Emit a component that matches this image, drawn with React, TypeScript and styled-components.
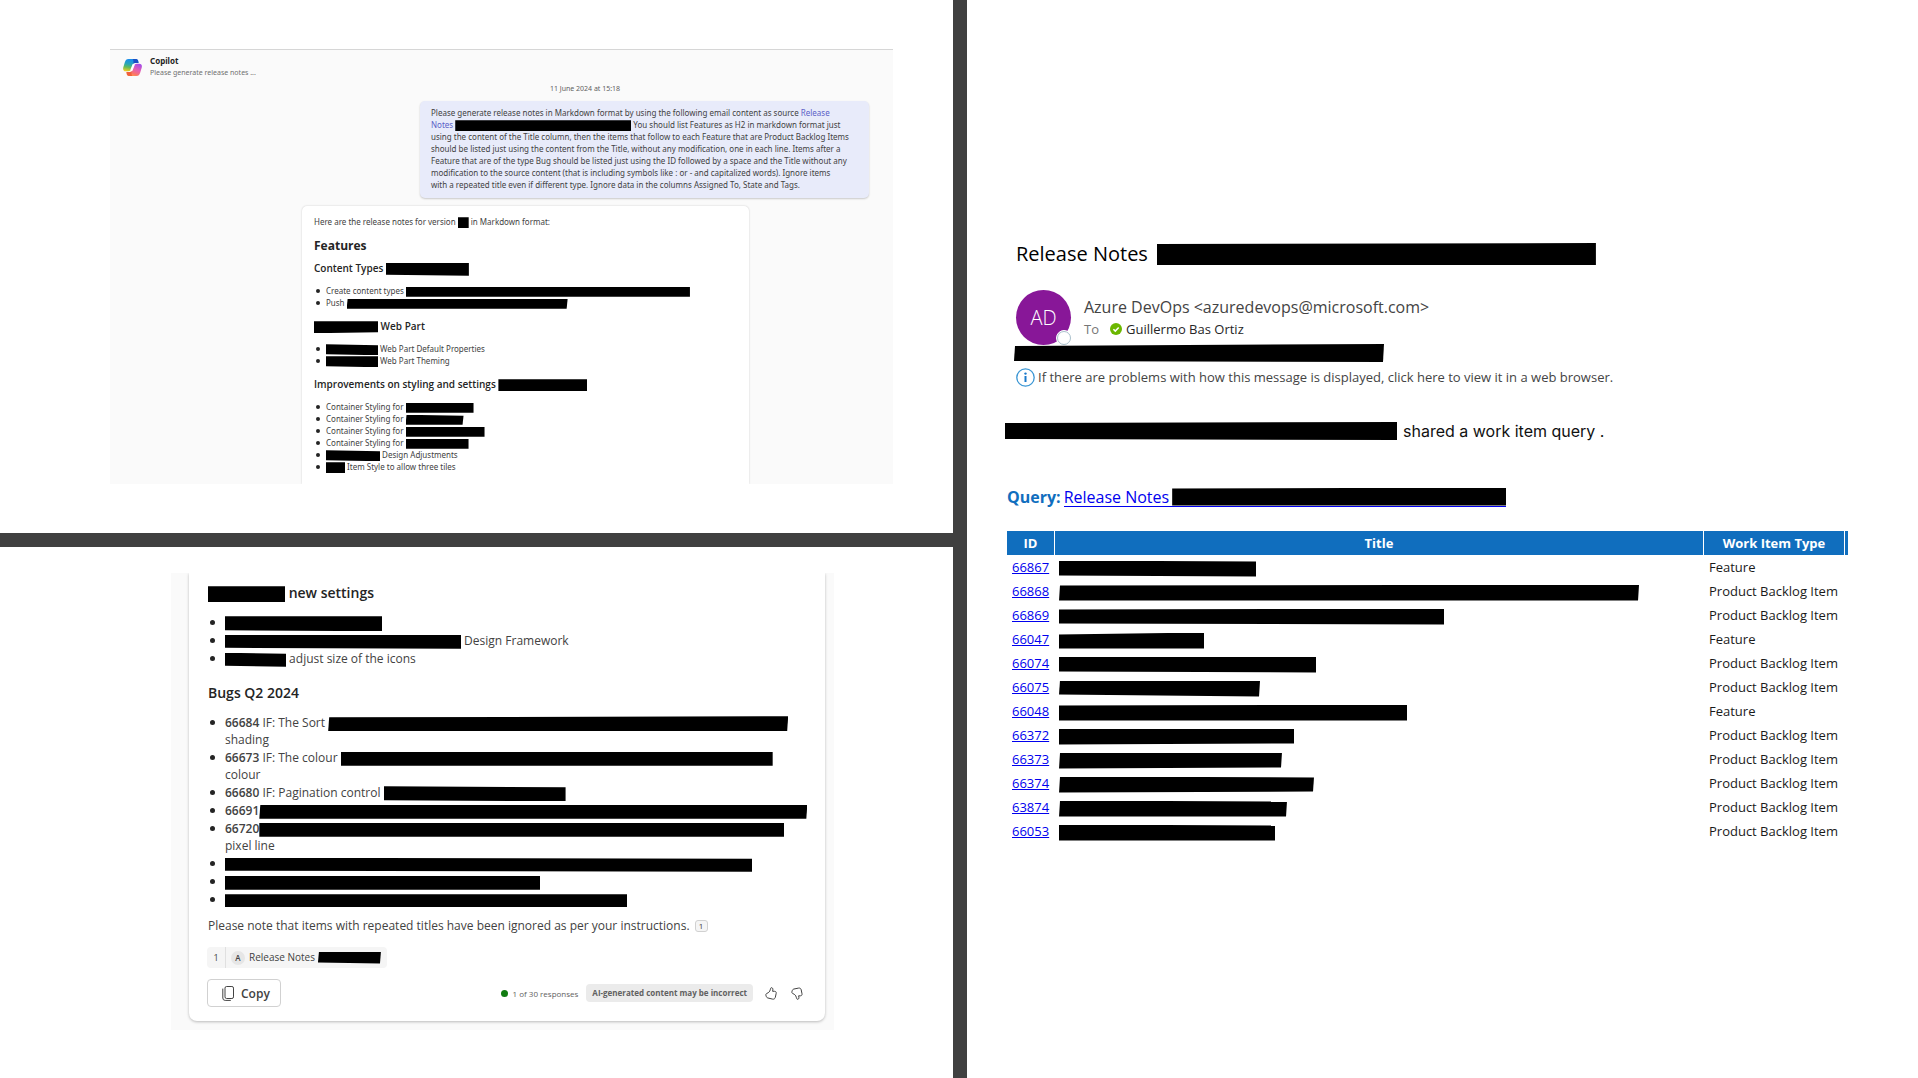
import React from "react";
import styled, { createGlobalStyle, css } from "styled-components";

/* ---------- shared ---------- */

const sans = `"Open Sans", "Noto Sans", sans-serif`;

const GlobalStyle = createGlobalStyle`
  *, *::before, *::after { box-sizing: border-box; }
  body { margin: 0; background: #404040; font-family: ${sans}; color: #242424; }
  h1, h2, h3, p, ul { margin: 0; padding: 0; }
  button { font: inherit; color: inherit; cursor: pointer; }
`;

type Cut = [number, number, number, number];

/* Black marker bar; cut = inset of each corner (top-left, top-right, bottom-right, bottom-left) */
const Redacted = styled.span<{ $w: number; $h: number; $cut?: Cut; $lean?: boolean }>`
  display: inline-block;
  flex: none;
  max-width: 100%;
  width: ${(p) => p.$w}px;
  height: ${(p) => p.$h}px;
  margin: -2px 0;
  vertical-align: middle;
  background: #000;
  ${({ $cut = [0, 0, 0, 0], $lean }) => css`
    clip-path: polygon(
      ${$lean ? 1 : 0}px ${$cut[0]}px,
      100% ${$cut[1]}px,
      calc(100% - ${$lean ? 1 : 0}px) calc(100% - ${$cut[2]}px),
      0 calc(100% - ${$cut[3]}px)
    );
  `}
`;

const Page = styled.main`
  display: grid;
  grid-template-columns: 953fr 951fr;
  gap: 14px;
  min-height: 100vh;
  background: #404040;
`;

const LeftColumn = styled.div`
  display: grid;
  grid-template-rows: 533fr 531fr;
  gap: 14px;
  min-width: 0;
`;

const Panel = styled.section`
  display: flex;
  flex-direction: column;
  min-width: 0;
  background: #fff;
`;

/* ---------- chat request ---------- */

const ChatPanel = styled(Panel)`
  padding: 49px 60px 49px 110px;
`;

const Chat = styled.div`
  flex: 1;
  display: flex;
  flex-direction: column;
  overflow: hidden;
  background: #fafafa;
  border-top: 1px solid #d6d6d6;
  font-family: "Noto Sans", sans-serif;
  font-size: 8px;
  line-height: 12px;
  color: #424242;
`;

const ChatHeader = styled.header`
  display: flex;
  align-items: center;
  gap: 8px;
  padding: 5px 13px 1px;
`;

const ChatName = styled.h1`
  font-size: 8px;
  line-height: 12px;
  font-weight: 700;
  color: #242424;
`;

const ChatPreview = styled.p`
  font-size: 7px;
  line-height: 12px;
  color: #707070;
`;

const Thread = styled.div`
  flex: 1;
  display: flex;
  flex-direction: column;
  margin: 3px 24px 0 191px;
`;

const Stamp = styled.time`
  align-self: center;
  font-size: 7px;
  color: #616161;
`;

const Bubble = styled.p`
  align-self: flex-end;
  margin-top: 6px;
  padding: 6px 10px 7px 11px;
  width: 449px;
  border-radius: 5px;
  background: #e8ebfa;
  box-shadow: 0 1px 2px rgba(0, 0, 0, 0.2);
`;

const SourceLink = styled.a`
  color: #5b5fc7;
  text-decoration: none;
`;

const AnswerTop = styled.article`
  flex: 1;
  margin: 8px 120px 0 1px;
  padding: 10px 12px 0;
  background: #fff;
  border-radius: 5px 5px 0 0;
  box-shadow: 0 0 2px rgba(0, 0, 0, 0.2);
`;

const SmallTitle = styled.h2`
  margin-top: 10px;
  font-family: ${sans};
  font-size: 12px;
  line-height: 16px;
  font-weight: 700;
  color: #242424;
`;

const SmallHeading = styled.h3<{ $first?: boolean }>`
  margin-top: ${(p) => (p.$first ? 7 : 10)}px;
  font-family: ${sans};
  font-size: 10px;
  line-height: 14px;
  font-weight: 600;
  color: #242424;
`;

const Bullets = styled.ul<{ $large?: boolean }>`
  list-style: none;
  margin-top: ${(p) => (p.$large ? 12 : 10)}px;
  padding-left: ${(p) => (p.$large ? 17 : 12)}px;

  li {
    position: relative;
    margin-bottom: ${(p) => (p.$large ? 1 : 0)}px;
  }
  li::before {
    content: "";
    position: absolute;
    left: ${(p) => (p.$large ? -15 : -10)}px;
    top: ${(p) => (p.$large ? 6 : 4)}px;
    width: ${(p) => (p.$large ? 5 : 4)}px;
    height: ${(p) => (p.$large ? 5 : 4)}px;
    border-radius: 50%;
    background: #242424;
  }
`;

/* ---------- chat answer ---------- */

const AnswerPanel = styled(Panel)`
  padding: 26px 119px 48px 171px;
`;

const AnswerFrame = styled.div`
  flex: 1;
  display: flex;
  overflow: hidden;
  padding: 0 9px 9px 18px;
  background: #fafafa;
`;

const AnswerBottom = styled.article`
  flex: 1;
  min-width: 0;
  padding: 11px 16px 11px 19px;
  background: #fff;
  border-radius: 0 0 8px 8px;
  box-shadow: 0 1px 3px rgba(0, 0, 0, 0.26);
  font-size: 12px;
  line-height: 17px;
  color: #424242;
`;

const Heading = styled.h3`
  font-size: 14px;
  line-height: 18px;
  font-weight: 600;
  color: #242424;

  ul + & {
    margin-top: 17px;
  }
`;

const ItemId = styled.strong`
  font-weight: 600;
`;

const Note = styled.p`
  margin-top: 9px;
  line-height: 18px;
`;

const Citation = styled.button`
  width: 13px;
  height: 12px;
  margin: 0 0 0 2px;
  padding: 0;
  vertical-align: 1px;
  border: 1px solid #d1d1d1;
  border-radius: 3px;
  background: #f5f5f5;
  font-size: 8px;
  line-height: 9px;
`;

const SourceChip = styled.a`
  display: flex;
  align-items: center;
  width: fit-content;
  height: 21px;
  margin: 12px 0 11px -1px;
  padding-right: 6px;
  border-radius: 4px;
  background: #f5f5f5;
  font-size: 10px;
  color: #424242;
  text-decoration: none;
`;

const ChipIndex = styled.span`
  align-self: stretch;
  display: flex;
  align-items: center;
  justify-content: center;
  width: 19px;
  border-right: 1px solid #e0e0e0;
  font-size: 9px;
`;

const ChipAvatar = styled.span`
  display: flex;
  align-items: center;
  justify-content: center;
  width: 14px;
  height: 14px;
  margin: 0 4px 0 5px;
  border-radius: 50%;
  background: #e6e6e6;
  font-size: 8px;
  font-weight: 600;
`;

const ChipLabel = styled.span`
  margin-right: 3px;
`;

const Footer = styled.footer`
  display: flex;
  align-items: center;
`;

const CopyButton = styled.button`
  display: flex;
  align-items: center;
  gap: 7px;
  height: 28px;
  margin: 0 auto 0 -1px;
  padding: 0 10px 0 14px;
  border: 1px solid #d1d1d1;
  border-radius: 4px;
  background: #fff;
  font-weight: 600;
`;

const Count = styled.span`
  display: flex;
  align-items: center;
  gap: 5px;
  font-size: 8px;
  color: #616161;

  &::before {
    content: "";
    width: 7px;
    height: 7px;
    border-radius: 50%;
    background: #107c10;
  }
`;

const Badge = styled.span`
  margin: 0 6px 0 8px;
  padding: 0 6px;
  border-radius: 4px;
  background: #ebebeb;
  font-size: 8px;
  line-height: 18px;
  font-weight: 700;
  color: #616161;
`;

const IconButton = styled.button`
  display: flex;
  padding: 6px;
  border: 0;
  background: none;

  & + & {
    margin-left: 2px;
  }
`;

/* ---------- e-mail ---------- */

const MailPanel = styled(Panel)`
  padding: 240px 70px 0 40px;
  color: #000;
`;

const MailHead = styled.header`
  padding-left: 9px;
`;

const Subject = styled.h1`
  display: flex;
  align-items: center;
  gap: 9px;
  font-size: 20px;
  line-height: 28px;
  font-weight: 400;
`;

const Sender = styled.div`
  display: flex;
  gap: 13px;
  margin-top: 22px;
`;

const Avatar = styled.div`
  position: relative;
  display: flex;
  align-items: center;
  justify-content: center;
  width: 55px;
  height: 55px;
  border-radius: 50%;
  background: #881798;
  color: #fff;
  font-size: 20px;
  font-weight: 300;
`;

const Presence = styled.span`
  position: absolute;
  right: -1px;
  bottom: -1px;
  width: 16px;
  height: 16px;
  border: 1px solid #fff;
  border-radius: 50%;
  background: #fff;

  &::before {
    content: "";
    display: block;
    height: 14px;
    border: 1px solid #a9c0cc;
    border-radius: 50%;
  }
`;

const Addresses = styled.div`
  padding-top: 6px;
`;

const From = styled.p`
  font-size: 16px;
  line-height: 22px;
  color: #444;
`;

const To = styled.p`
  display: flex;
  align-items: center;
  gap: 4px;
  font-size: 13px;
  line-height: 22px;
  color: #262626;
`;

const ToLabel = styled.span`
  width: 22px;
  color: #767676;
`;

const HiddenLine = styled.p`
  display: flex;
  height: 16px;
  margin: 1px 0 0 -2px;
`;

const InfoLink = styled.button`
  display: flex;
  align-items: center;
  gap: 3px;
  margin-top: 5px;
  padding: 0;
  border: 0;
  background: none;
  font-size: 13px;
  line-height: 20px;
  color: #444;
  text-align: left;
`;

const Shared = styled.p`
  display: flex;
  align-items: center;
  gap: 6px;
  margin: 32px 0 0 -2px;
  font-family: Inter, "Liberation Sans", sans-serif;
  font-size: 16px;
  line-height: 24px;
  color: #111;
`;

const Query = styled.p`
  display: flex;
  align-items: center;
  gap: 3px;
  margin: 42px 0 22px;
  font-size: 16px;
  line-height: 24px;
`;

const QueryLabel = styled.strong`
  color: #106ebe;
`;

const QueryLink = styled.a`
  display: flex;
  align-items: center;
  gap: 3px;
  height: 19px;
  border-bottom: 1px solid #0000ee;
  color: #0000ee;
  text-decoration: none;
`;

const Items = styled.table`
  width: 100%;
  border-collapse: separate;
  border-spacing: 0;
  font-size: 13px;
  line-height: 18px;
  color: #1a1a1a;

  th {
    height: 24px;
    padding: 0;
    background: #106ebe;
    border-right: 1px solid #fff;
    color: #fff;
    font-weight: 700;
  }
  th:last-child {
    width: 3px;
    border-right: 0;
  }
  td {
    height: 24px;
    padding: 0 0 0 5px;
    white-space: nowrap;
  }
  td:nth-child(2) {
    padding-left: 4px;
  }
  td:last-child {
    padding: 0;
  }
  a {
    color: #0000ee;
  }
`;

const IdHead = styled.th`
  width: 48px;
`;

const TypeHead = styled.th`
  width: 141px;
`;

/* ---------- icons ---------- */

const CopilotLogo = () => (
  <svg width="19" height="17" viewBox="0 0 38 34" aria-hidden="true">
    <defs>
      <linearGradient id="cpA" x1="0.6" y1="0" x2="0.4" y2="1">
        <stop offset="0.1" stopColor="#1a8fe8" />
        <stop offset="0.45" stopColor="#2aa6b4" />
        <stop offset="0.7" stopColor="#62bb5a" />
        <stop offset="1" stopColor="#e8cc28" />
      </linearGradient>
      <linearGradient id="cpB" x1="0.8" y1="0" x2="0.3" y2="1">
        <stop offset="0" stopColor="#a34be8" />
        <stop offset="0.45" stopColor="#e45fb4" />
        <stop offset="0.8" stopColor="#fb7466" />
        <stop offset="1" stopColor="#ffa24a" />
      </linearGradient>
    </defs>
    <path d="M11 0h15c3 0 4 2 4.500 4.500L31 8h-6c-3 0-4.500 1-5.500 4l-2.500 7c-1.500 4-3 5.500-7 5.500H5.500C1 24.500-0.500 21 0.500 17L3.500 7C5 2 7 0 11 0z" fill="url(#cpA)" />
    <path d="M19 0h7c3 0 4 2 4.500 4.500L31 8h-6c-2 0-3.500 0.500-4.500 2C21.500 5 21 1.500 19 0z" fill="#1b4fc4" />
    <path d="M27 34H12c-3 0-4-2-4.500-4.500L7 26h6c3 0 4.500-1 5.500-4l2.500-7c1.500-4 3-5.500 7-5.500h4.500c4.500 0 6 3.500 5 7.500l-3 10c-1.500 5-3.500 7-7.500 7z" fill="url(#cpB)" />
    <path d="M19 34h-7c-3 0-4-2-4.500-4.500L7 26h6c2 0 3.500-0.500 4.500-2C16.500 29 17 32.500 19 34z" fill="#f0603c" />
    <path d="M21 12l-4 10" stroke="#fff" strokeWidth="4.500" strokeLinecap="round" />
  </svg>
);

const CopyIcon = () => (
  <svg width="12" height="15" viewBox="0 0 12 15" fill="none" stroke="#424242" aria-hidden="true">
    <rect x="3" y="0.5" width="8.5" height="12" rx="1.6" />
    <path d="M0.8 2.6v9.4a2.4 2.4 0 0 0 2.4 2.4h5.6" />
  </svg>
);

const ThumbUp = () => (
  <svg width="12" height="13" viewBox="0 0 12 13" fill="none" stroke="#424242" strokeLinejoin="round" aria-hidden="true">
    <path d="M6.6 0.7c1.3 0.2 1.6 1.5 1 3.6h2c1.2 0 1.8 0.9 1.6 2l-0.9 4.1c-0.3 1.3-1.4 2-2.8 1.7L3 11C1.900 10.700 1.500 10.200 1.200 9.200L0.900 8.200c-0.200-0.900 0.200-1.500 1-1.800 2.100-0.900 2.700-1.700 3.300-3.400 0.300-0.900 0.300-2.500 1.400-2.300z" />
  </svg>
);

const ThumbDown = () => (
  <svg width="12" height="13" viewBox="0 0 12 13" fill="none" stroke="#424242" strokeLinejoin="round" aria-hidden="true">
    <path d="M6.700 12.300c1.300-0.200 1.500-1.500 0.900-3.500h1.900c1.200 0 1.700-0.900 1.500-2l-0.800-4c-0.300-1.300-1.300-2-2.700-1.700L3 2C1.900 2.300 1.500 2.800 1.200 3.800L0.900 4.800c-0.200 0.900 0.200 1.500 1 1.800 2.100 0.900 2.700 1.700 3.300 3.400 0.400 0.900 0.400 2.500 1.500 2.300z" />
  </svg>
);

const CheckBadge = () => (
  <svg width="12" height="12" viewBox="0 0 12 12" aria-hidden="true">
    <circle cx="6" cy="6" r="6" fill="#6bb700" />
    <path d="M3.400 6.200l1.900 1.900 3.400-3.700" fill="none" stroke="#fff" strokeWidth="1.500" />
  </svg>
);

const InfoIcon = () => (
  <svg width="19" height="19" viewBox="0 0 19 19" aria-hidden="true">
    <circle cx="9.500" cy="9.500" r="8.700" fill="#fff" stroke="#3a96d4" strokeWidth="1.300" />
    <circle cx="9.500" cy="5.600" r="1.200" fill="#1979ca" />
    <path d="M9.500 8v6" stroke="#1979ca" strokeWidth="2" />
  </svg>
);

/* ---------- data ---------- */

type Item = { id: string; bar: number; cut?: Cut; lean?: boolean; type: string };

const PBI = "Product Backlog Item";
const items: Item[] = [
  { id: "66867", bar: 197, cut: [0, 1, 0, 1], type: "Feature" },
  { id: "66868", bar: 580, cut: [1, 0, 0, 0], lean: true, type: PBI },
  { id: "66869", bar: 385, cut: [1, 0, 0, 1], type: PBI },
  { id: "66047", bar: 145, cut: [2, 0, 0, 0], type: "Feature" },
  { id: "66074", bar: 257, cut: [0, 0, 0, 1], type: PBI },
  { id: "66075", bar: 201, cut: [0, 0, 0, 2], lean: true, type: PBI },
  { id: "66048", bar: 348, cut: [1, 0, 0, 0], type: "Feature" },
  { id: "66372", bar: 235, cut: [0, 0, 1, 0], type: PBI },
  { id: "66373", bar: 223, cut: [0, 0, 1, 0], lean: true, type: PBI },
  { id: "66374", bar: 255, cut: [0, 1, 1, 0], lean: true, type: PBI },
  { id: "63874", bar: 228, cut: [0, 1, 0, 0], lean: true, type: PBI },
  { id: "66053", bar: 216, cut: [0, 1, 0, 0], type: PBI },
];

/* ---------- page ---------- */

const Request = () => (
  <ChatPanel>
    <Chat>
      <ChatHeader>
        <CopilotLogo />
        <div>
          <ChatName>Copilot</ChatName>
          <ChatPreview>Please generate release notes ...</ChatPreview>
        </div>
      </ChatHeader>
      <Thread>
        <Stamp dateTime="2024-06-11T15:18">11 June 2024 at 15:18</Stamp>
        <Bubble>
          Please generate release notes in Markdown format by using the following email content as source{" "}
          <SourceLink href="#source">
            Release
            <br />
            Notes <Redacted $w={176} $h={11} />
          </SourceLink>{" "}
          You should list Features as H2 in markdown format just
          <br />
          using the content of the Title column, then the items that follow to each Feature that are Product Backlog Items
          <br />
          should be listed just using the content from the Title, without any modification, one in each line. Items after a
          <br />
          Feature that are of the type Bug should be listed just using the ID followed by a space and the Title without any
          <br />
          modification to the source content (that is including symbols like : or - and capitalized words). Ignore items
          <br />
          with a repeated title even if different type. Ignore data in the columns Assigned To, State and Tags.
        </Bubble>
        <AnswerTop>
          <p>
            Here are the release notes for version <Redacted $w={11} $h={11} /> in Markdown format:
          </p>
          <SmallTitle>Features</SmallTitle>
          <SmallHeading $first>
            Content Types <Redacted $w={83} $h={13} $cut={[0, 0, 0, 1]} />
          </SmallHeading>
          <Bullets>
            <li>
              Create content types <Redacted $w={284} $h={10} />
            </li>
            <li>
              Push <Redacted $w={221} $h={10} $lean />
            </li>
          </Bullets>
          <SmallHeading>
            <Redacted $w={64} $h={12} $cut={[0, 0, 1, 0]} /> Web Part
          </SmallHeading>
          <Bullets>
            <li>
              <Redacted $w={52} $h={11} $cut={[0, 1, 0, 1]} /> Web Part Default Properties
            </li>
            <li>
              <Redacted $w={52} $h={11} $cut={[0, 0, 0, 1]} /> Web Part Theming
            </li>
          </Bullets>
          <SmallHeading>
            Improvements on styling and settings <Redacted $w={89} $h={12} />
          </SmallHeading>
          <Bullets>
            <li>
              Container Styling for <Redacted $w={68} $h={10} />
            </li>
            <li>
              Container Styling for <Redacted $w={58} $h={10} $cut={[0, 1, 0, 0]} $lean />
            </li>
            <li>
              Container Styling for <Redacted $w={79} $h={10} />
            </li>
            <li>
              Container Styling for <Redacted $w={63} $h={10} />
            </li>
            <li>
              <Redacted $w={54} $h={11} $cut={[0, 1, 0, 1]} /> Design Adjustments
            </li>
            <li>
              <Redacted $w={19} $h={11} /> Item Style to allow three tiles
            </li>
          </Bullets>
        </AnswerTop>
      </Thread>
    </Chat>
  </ChatPanel>
);

const Answer = () => (
  <AnswerPanel>
    <AnswerFrame>
      <AnswerBottom>
        <Heading>
          <Redacted $w={77} $h={16} /> new settings
        </Heading>
        <Bullets $large>
          <li>
            <Redacted $w={157} $h={15} $cut={[0, 0, 0, 1]} />
          </li>
          <li>
            <Redacted $w={236} $h={14} $cut={[0, 0, 0, 1]} /> Design Framework
          </li>
          <li>
            <Redacted $w={61} $h={14} $cut={[0, 1, 0, 1]} /> adjust size of the icons
          </li>
        </Bullets>
        <Heading>Bugs Q2 2024</Heading>
        <Bullets $large>
          <li>
            <ItemId>66684</ItemId> IF: The Sort <Redacted $w={460} $h={15} $cut={[1, 0, 0, 0]} $lean />
            <br />
            shading
          </li>
          <li>
            <ItemId>66673</ItemId> IF: The colour <Redacted $w={432} $h={14} />
            <br />
            colour
          </li>
          <li>
            <ItemId>66680</ItemId> IF: Pagination control <Redacted $w={182} $h={15} $cut={[0, 1, 0, 1]} />
          </li>
          <li>
            <ItemId>66691</ItemId>
            <Redacted $w={548} $h={14} $lean />
          </li>
          <li>
            <ItemId>66720</ItemId>
            <Redacted $w={525} $h={14} />
            <br />
            pixel line
          </li>
          <li>
            <Redacted $w={527} $h={14} $cut={[0, 1, 0, 1]} />
          </li>
          <li>
            <Redacted $w={315} $h={14} />
          </li>
          <li>
            <Redacted $w={402} $h={13} />
          </li>
        </Bullets>
        <Note>
          Please note that items with repeated titles have been ignored as per your instructions. <Citation>1</Citation>
        </Note>
        <SourceChip href="#source">
          <ChipIndex>1</ChipIndex>
          <ChipAvatar>A</ChipAvatar>
          <ChipLabel>Release Notes</ChipLabel>
          <Redacted $w={63} $h={12} $cut={[0, 0, 0, 1]} $lean />
        </SourceChip>
        <Footer>
          <CopyButton>
            <CopyIcon />
            Copy
          </CopyButton>
          <Count>1 of 30 responses</Count>
          <Badge>AI-generated content may be incorrect</Badge>
          <IconButton aria-label="Like">
            <ThumbUp />
          </IconButton>
          <IconButton aria-label="Dislike">
            <ThumbDown />
          </IconButton>
        </Footer>
      </AnswerBottom>
    </AnswerFrame>
  </AnswerPanel>
);

const Mail = () => (
  <MailPanel>
    <MailHead>
      <Subject>
        Release Notes
        <Redacted $w={439} $h={22} $cut={[1, 0, 0, 0]} />
      </Subject>
      <Sender>
        <Avatar>
          AD
          <Presence />
        </Avatar>
        <Addresses>
          <From>Azure DevOps &lt;azuredevops@microsoft.com&gt;</From>
          <To>
            <ToLabel>To</ToLabel>
            <CheckBadge />
            Guillermo Bas Ortiz
          </To>
        </Addresses>
      </Sender>
      <HiddenLine>
        <Redacted $w={370} $h={18} $cut={[2, 0, 0, 1]} $lean />
      </HiddenLine>
      <InfoLink>
        <InfoIcon />
        If there are problems with how this message is displayed, click here to view it in a web browser.
      </InfoLink>
    </MailHead>
    <Shared>
      <Redacted $w={392} $h={18} $cut={[1, 0, 0, 1]} />
      shared a work item query .
    </Shared>
    <Query>
      <QueryLabel>Query:</QueryLabel>
      <QueryLink href="#query">
        Release Notes
        <Redacted $w={334} $h={18} $cut={[1, 0, 0, 0]} />
      </QueryLink>
    </Query>
    <Items>
      <thead>
        <tr>
          <IdHead>ID</IdHead>
          <th>Title</th>
          <TypeHead>Work Item Type</TypeHead>
          <th aria-hidden="true" />
        </tr>
      </thead>
      <tbody>
        {items.map((it) => (
          <tr key={it.id}>
            <td>
              <a href={`#${it.id}`}>{it.id}</a>
            </td>
            <td>
              <Redacted $w={it.bar} $h={16} $cut={it.cut} $lean={it.lean} />
            </td>
            <td>{it.type}</td>
            <td />
          </tr>
        ))}
      </tbody>
    </Items>
  </MailPanel>
);

export default function App() {
  return (
    <>
      <GlobalStyle />
      <Page>
        <LeftColumn>
          <Request />
          <Answer />
        </LeftColumn>
        <Mail />
      </Page>
    </>
  );
}
